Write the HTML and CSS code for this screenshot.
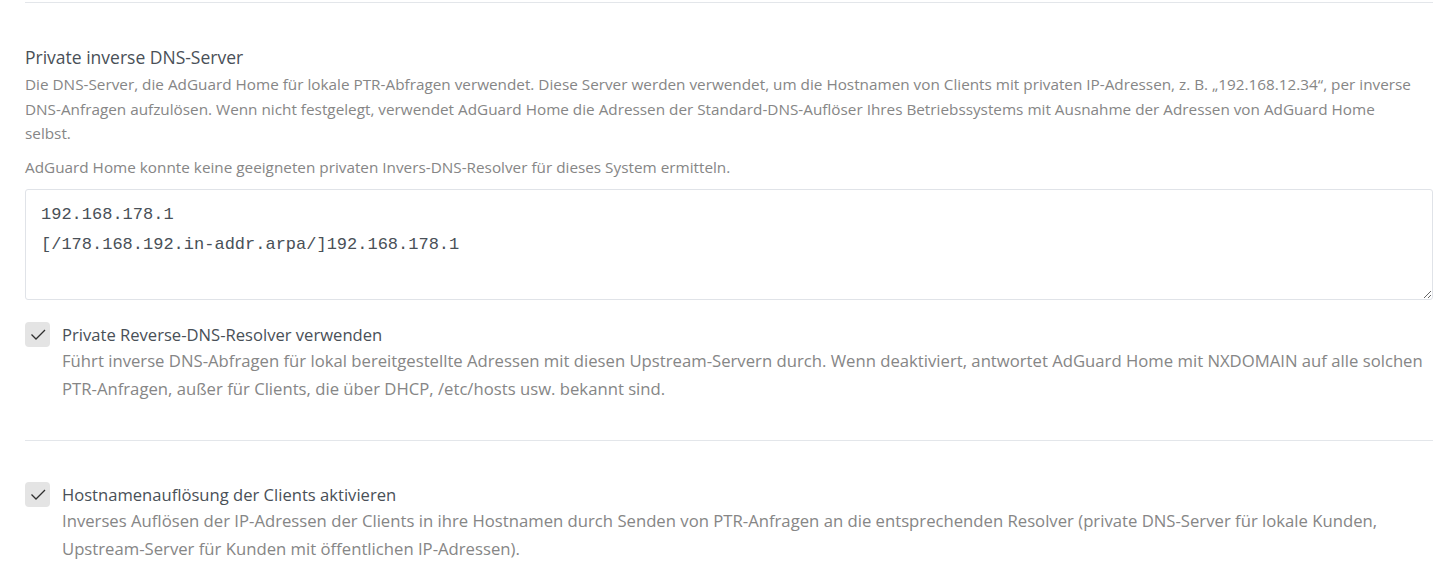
FILE: index.html
```html
<!DOCTYPE html>
<html lang="de">
<head>
<meta charset="utf-8">
<link rel="stylesheet" href="styles.css">
</head>
<body>
<div class="page">
  <hr class="sep top">
  <section class="field">
    <div class="title">Private inverse DNS-Server</div>
    <div class="desc">Die DNS-Server, die AdGuard Home für lokale PTR-Abfragen verwendet. Diese Server werden verwendet, um die Hostnamen von Clients mit privaten IP-Adressen, z. B. „192.168.12.34“, per inverse DNS-Anfragen aufzulösen. Wenn nicht festgelegt, verwendet AdGuard Home die Adressen der Standard-DNS-Auflöser Ihres Betriebssystems mit Ausnahme der Adressen von AdGuard Home selbst.</div>
    <div class="note">AdGuard Home konnte keine geeigneten privaten Invers-DNS-Resolver für dieses System ermitteln.</div>
    <textarea class="box" spellcheck="false">192.168.178.1
[/178.168.192.in-addr.arpa/]192.168.178.1</textarea>
  </section>
  <div class="check">
    <span class="tick"><svg width="16" height="11" viewBox="0 0 16 11"><path d="M1.5 5.5 L6 10 L15 1" fill="none" stroke="#2f2f2f" stroke-width="1.3"/></svg></span>
    <div class="ctext">
      <div class="clabel">Private Reverse-DNS-Resolver verwenden</div>
      <div class="cdesc">Führt inverse DNS-Abfragen für lokal bereitgestellte Adressen mit diesen Upstream-Servern durch. Wenn deaktiviert, antwortet AdGuard Home mit NXDOMAIN auf alle solchen PTR-Anfragen, außer für Clients, die über DHCP, /etc/hosts usw. bekannt sind.</div>
    </div>
  </div>
  <hr class="sep mid">
  <div class="check second">
    <span class="tick"><svg width="16" height="11" viewBox="0 0 16 11"><path d="M1.5 5.5 L6 10 L15 1" fill="none" stroke="#2f2f2f" stroke-width="1.3"/></svg></span>
    <div class="ctext">
      <div class="clabel">Hostnamenauflösung der Clients aktivieren</div>
      <div class="cdesc">Inverses Auflösen der IP-Adressen der Clients in ihre Hostnamen durch Senden von PTR-Anfragen an die entsprechenden Resolver (private DNS-Server für lokale Kunden, Upstream-Server für Kunden mit öffentlichen IP-Adressen).</div>
    </div>
  </div>
</div>
</body>
</html>
```
FILE: styles.css
```css
html, body { margin: 0; padding: 0; background: #fff; }
body { font-family: "Open Sans", "Noto Sans", sans-serif; color: #495057; }
.page { width: 1408px; margin-left: 25px; }
.sep { border: 0; border-top: 1px solid #e3e6ea; margin: 0; }
.sep.top { margin-top: 2px; }
.field { padding-top: 42px; }
.title { font-size: 17.5px; line-height: 24px; color: #495057; }
.desc { font-size: 15.3px; line-height: 24.5px; color: #868686; margin-top: 3px; max-width: 1392px; }
.note { font-size: 15.3px; line-height: 20px; color: #868686; margin-top: 11px; }
.box { display: block; box-sizing: border-box; width: 100%; height: 111px; margin-top: 12px; padding: 10px 15px; border: 1px solid #e0e3e8; border-radius: 3px; font-family: "Liberation Mono", monospace; font-size: 17px; line-height: 30px; color: #495057; resize: vertical; outline: none; }
.check { display: flex; gap: 12px; align-items: flex-start; margin-top: 21px; }
.tick { flex: none; width: 25px; height: 25px; border-radius: 4px; background: #e4e4e4; display: flex; align-items: center; justify-content: center; margin-top: 1px; }
.clabel { font-size: 16.6px; line-height: 28px; color: #495057; }
.cdesc { font-size: 16.7px; line-height: 28px; color: #868686; margin-top: -2px; }
.sep.mid { margin-top: 37px; }
.check.second { margin-top: 40px; }
```
